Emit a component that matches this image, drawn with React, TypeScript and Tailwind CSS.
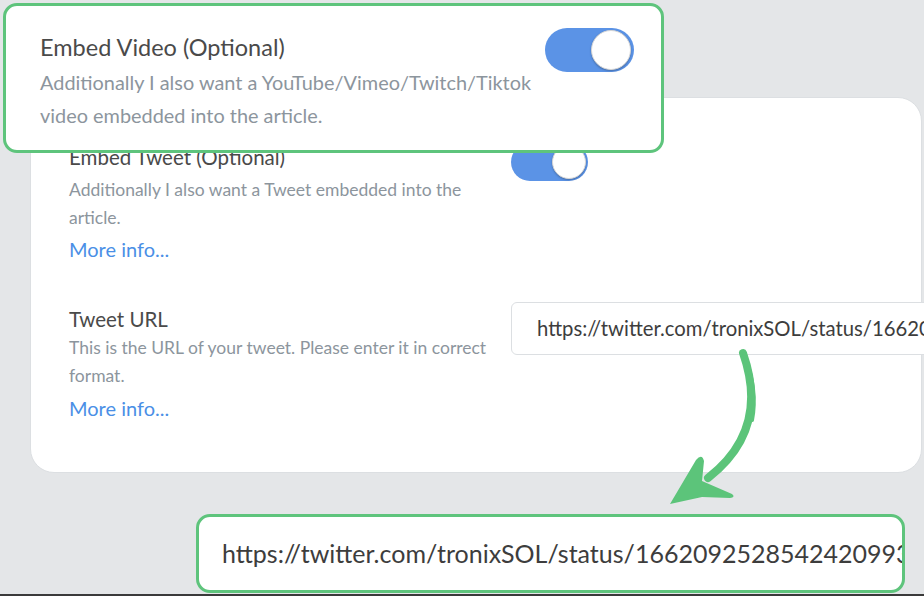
import React from "react";

const font = { fontFamily: "Lato, 'Noto Sans', sans-serif" };

function Toggle({ big }: { big?: boolean }) {
  return (
    <div
      className={
        big
          ? "relative w-[89px] h-[44px] rounded-full bg-[#5b93e6] shrink-0"
          : "relative w-[77px] h-[38px] rounded-full bg-[#5b93e6] shrink-0"
      }
    >
      <div
        className={
          big
            ? "absolute right-[3px] top-[2px] w-[40px] h-[40px] rounded-full bg-white border border-[#d6d6d6] shadow-[0_1px_2px_rgba(0,0,0,0.25)]"
            : "absolute right-[2px] top-[2px] w-[34px] h-[34px] rounded-full bg-white border border-[#d6d6d6] shadow-[0_1px_2px_rgba(0,0,0,0.25)]"
        }
      />
    </div>
  );
}

function Arrow() {
  return (
    <svg
      className="absolute left-[640px] top-[340px]"
      width="130"
      height="175"
      viewBox="0 0 130 175"
    >
      <path
        d="M103 13 Q130 90 68 138"
        fill="none"
        stroke="#5cc47a"
        strokeWidth="8"
        strokeLinecap="round"
      />
      <path
        d="M104 14 Q118 50 112 80"
        fill="none"
        stroke="#5cc47a"
        strokeWidth="4"
        strokeLinecap="round"
      />
      <path
        d="M30 164 L56 120 Q62 113 64 121 L62 141 L92 154 Q96 157 90 158 L62 157 Z"
        fill="#5cc47a"
      />
    </svg>
  );
}

export default function App() {
  return (
    <div
      className="relative w-[924px] h-[596px] overflow-hidden bg-[#e4e6e8] flex flex-col"
      style={font}
    >
      <div className="flex-1 flex flex-col pt-[97px] pl-[30px]">
        {/* Card */}
        <div className="w-[892px] h-[376px] bg-white rounded-[24px] border border-[#dcdfe2] pt-[46px] pl-[38px] flex flex-col">
          <div className="flex">
            <div className="w-[442px] shrink-0">
              <div className="text-[20.5px] leading-[26px] text-[#4a4a4a]">Embed Tweet (Optional)</div>
              <div className="mt-[6px] text-[17.5px] leading-[28px] text-[#8c959d]">
                Additionally I also want a Tweet embedded into the
                <br />
                article.
              </div>
              <div className="mt-[2px] text-[20px] leading-[30px] text-[#4a8fe6]">More info...</div>
            </div>
            <div className="mt-[-1px]">
              <Toggle />
            </div>
          </div>
          <div className="flex mt-[42px]">
            <div className="w-[442px] shrink-0">
              <div className="text-[20.5px] leading-[26px] text-[#4a4a4a]">Tweet URL</div>
              <div className="mt-[2px] text-[17.5px] leading-[28px] text-[#8c959d]">
                This is the URL of your tweet. Please enter it in correct
                <br />
                format.
              </div>
              <div className="mt-[3px] text-[20px] leading-[30px] text-[#4a8fe6]">More info...</div>
            </div>
            <div className="mt-[-4px] w-[520px] h-[53px] shrink-0 rounded-[6px] border border-[#dcdfe2] bg-white flex items-center pl-[25px] overflow-hidden whitespace-nowrap">
              <span className="text-[20.3px] text-[#3d3d3d]">https://twitter.com/tronixSOL/status/1662092528542420993</span>
            </div>
          </div>
        </div>

        {/* Zoomed URL */}
        <div className="ml-[166px] mt-[41px] w-[709px] h-[79px] rounded-[14px] border-[3px] border-[#5ec47c] bg-white flex items-center pl-[23px] overflow-hidden whitespace-nowrap">
          <span className="text-[25px] text-[#3d3d3d]">https://twitter.com/tronixSOL/status/1662092528542420993</span>
        </div>
      </div>
      <div className="h-[2px] bg-[#3a3a3a]" />

      {/* Highlighted Embed Video */}
      <div className="absolute left-[3px] top-[3px] w-[661px] h-[150px] rounded-[14px] border-[3px] border-[#5ec47c] bg-white flex items-start justify-between pl-[34px] pr-[27px] pt-[26px]">
        <div>
          <div className="text-[23.5px] leading-[30px] text-[#4a4a4a]">Embed Video (Optional)</div>
          <div className="mt-[4px] text-[19.9px] leading-[33px] text-[#8c959d]">
            Additionally I also want a YouTube/Vimeo/Twitch/Tiktok
            <br />
            video embedded into the article.
          </div>
        </div>
        <div className="mt-[-4px]">
          <Toggle big />
        </div>
      </div>

      <Arrow />
    </div>
  );
}
